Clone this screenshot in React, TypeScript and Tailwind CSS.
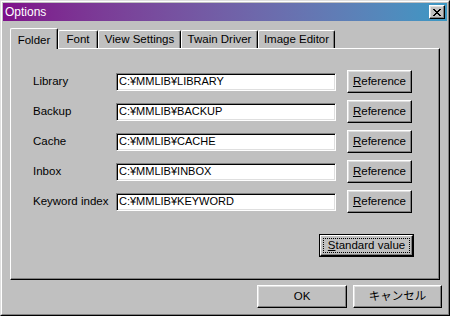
import React from 'react';

const rows = [
  { label: 'Library', path: 'C:¥MMLIB¥LIBRARY' },
  { label: 'Backup', path: 'C:¥MMLIB¥BACKUP' },
  { label: 'Cache', path: 'C:¥MMLIB¥CACHE' },
  { label: 'Inbox', path: 'C:¥MMLIB¥INBOX' },
  { label: 'Keyword index', path: 'C:¥MMLIB¥KEYWORD' },
];

const tabs = [
  { name: 'Font', w: 'w-[40px]' },
  { name: 'View Settings', w: 'w-[83px]' },
  { name: 'Twain Driver', w: 'w-[77px]' },
  { name: 'Image Editor', w: 'w-[77px]' },
];

const raised =
  'bg-[#c0c0c0] border-t border-l border-white border-r border-b border-r-black border-b-black shadow-[inset_-1px_-1px_0_#808080,inset_1px_1px_0_#dfdfdf]';

export default function App() {
  return (
    <div className="w-[450px] h-[316px] bg-[#c0c0c0] font-['Liberation_Sans','Noto_Sans_CJK_JP',sans-serif] text-[11.5px] text-black border border-t-[#dfdfdf] border-l-[#dfdfdf] border-r-black border-b-black">
      <div className="h-full border border-t-white border-l-white border-r-[#808080] border-b-[#808080] flex flex-col p-px">
        {/* title bar */}
        <div className="h-[18px] flex items-center justify-between bg-gradient-to-r from-[#7e0d8a] to-[#3a98c4] pl-[2px] pr-[2px]">
          <span className="text-white text-[12px] leading-none">Options</span>
          <button className={`${raised} w-[16px] h-[14px] flex items-center justify-center p-0`}>
            <svg width="8" height="7" viewBox="0 0 8 7" shapeRendering="crispEdges">
              <path d="M0 0h2v1H0zM6 0h2v1H6zM1 1h2v1H1zM5 1h2v1H5zM2 2h4v1H2zM3 3h2v1H3zM2 4h4v1H2zM1 5h2v1H1zM5 5h2v1H5zM0 6h2v1H0zM6 6h2v1H6z" fill="#000" />
            </svg>
          </button>
        </div>

        {/* tabs */}
        <div className="mt-[7px] ml-[7px] h-[20px] flex items-end relative z-10">
          <div className="w-[48px] h-[21px] -mb-px bg-[#c0c0c0] border-t border-l border-white border-r border-r-black rounded-t-[2px] shadow-[inset_-1px_0_0_#808080] flex items-start justify-center pt-[3px]">
            Folder
          </div>
          {tabs.map((t) => (
            <div
              key={t.name}
              className={`${t.w} h-[18px] bg-[#c0c0c0] border-t border-l border-white border-r border-r-black rounded-t-[2px] shadow-[inset_-1px_0_0_#808080] flex items-center justify-center`}
            >
              {t.name}
            </div>
          ))}
        </div>

        {/* panel */}
        <div className="ml-[7px] w-[430px] h-[232px] border-t border-l border-white border-r border-b border-r-black border-b-black shadow-[inset_-1px_-1px_0_#808080] flex flex-col pt-[21px] pl-[22px]">
          <div className="flex flex-col gap-[7px]">
            {rows.map((r) => (
              <div key={r.label} className="flex items-center h-[23px]">
                <span className="w-[83px]">{r.label}</span>
                <div className="w-[220px] h-[18px] bg-white border-t border-l border-[#808080] border-r border-b border-r-white border-b-white shadow-[inset_1px_1px_0_#000,inset_-1px_-1px_0_#dfdfdf] flex items-center pl-[2px] leading-none text-[11px]">
                  {r.path}
                </div>
                <button className={`${raised} ml-[11px] w-[65px] h-[23px] flex items-center justify-center`}>
                  <span><span className="underline">R</span>eference</span>
                </button>
              </div>
            ))}
          </div>
          <div className="mt-[21px] ml-[286px] w-[95px] h-[23px] border border-black">
            <div className="h-full border-t border-l border-white border-r border-b border-r-black border-b-black shadow-[inset_-1px_-1px_0_#808080] p-[2px]">
              <div className="h-full border border-dotted border-black flex items-center justify-center">
                <span><span className="underline">S</span>tandard value</span>
              </div>
            </div>
          </div>
        </div>

        {/* bottom buttons */}
        <div className="mt-[5px] flex justify-end gap-[6px] pr-[5px]">
          <button className={`${raised} w-[90px] h-[23px] flex items-center justify-center`}>OK</button>
          <button className={`${raised} w-[89px] h-[23px] flex items-center justify-center`}>キャンセル</button>
        </div>
      </div>
    </div>
  );
}
